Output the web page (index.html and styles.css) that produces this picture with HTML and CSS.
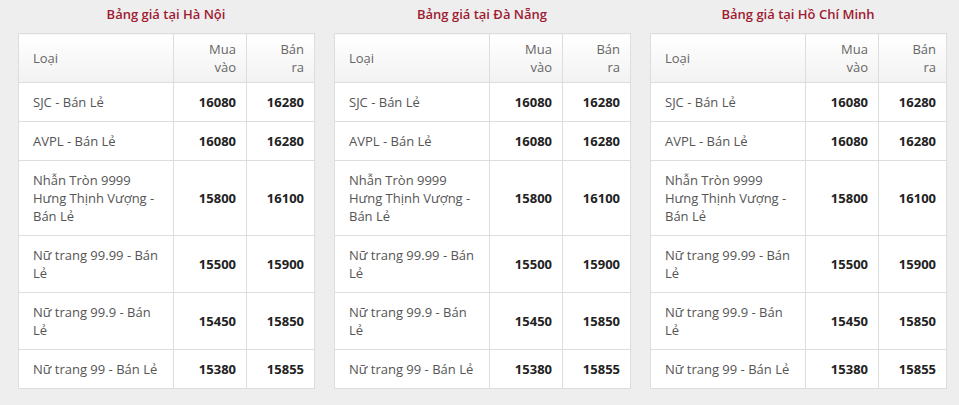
FILE: index.html
```html
<!DOCTYPE html>
<html lang="vi">
<head>
<meta charset="utf-8">
<title>Bảng giá vàng</title>
<link rel="stylesheet" href="styles.css">
</head>
<body>
<div class="wrap">
  <section class="col">
    <h3 class="title">Bảng giá tại Hà Nội</h3>
    <table class="price">
      <colgroup><col class="c1"><col class="c2"><col class="c3"></colgroup>
      <thead><tr><th class="name">Loại</th><th>Mua vào</th><th>Bán ra</th></tr></thead>
      <tbody>
        <tr><td class="name">SJC - Bán Lẻ</td><td>16080</td><td>16280</td></tr>
        <tr><td class="name">AVPL - Bán Lẻ</td><td>16080</td><td>16280</td></tr>
        <tr><td class="name">Nhẫn Tròn 9999 Hưng Thịnh Vượng - Bán Lẻ</td><td>15800</td><td>16100</td></tr>
        <tr><td class="name">Nữ trang 99.99 - Bán Lẻ</td><td>15500</td><td>15900</td></tr>
        <tr><td class="name">Nữ trang 99.9 - Bán Lẻ</td><td>15450</td><td>15850</td></tr>
        <tr><td class="name">Nữ trang 99 - Bán Lẻ</td><td>15380</td><td>15855</td></tr>
      </tbody>
    </table>
  </section>
  <section class="col">
    <h3 class="title">Bảng giá tại Đà Nẵng</h3>
    <table class="price">
      <colgroup><col class="c1"><col class="c2"><col class="c3"></colgroup>
      <thead><tr><th class="name">Loại</th><th>Mua vào</th><th>Bán ra</th></tr></thead>
      <tbody>
        <tr><td class="name">SJC - Bán Lẻ</td><td>16080</td><td>16280</td></tr>
        <tr><td class="name">AVPL - Bán Lẻ</td><td>16080</td><td>16280</td></tr>
        <tr><td class="name">Nhẫn Tròn 9999 Hưng Thịnh Vượng - Bán Lẻ</td><td>15800</td><td>16100</td></tr>
        <tr><td class="name">Nữ trang 99.99 - Bán Lẻ</td><td>15500</td><td>15900</td></tr>
        <tr><td class="name">Nữ trang 99.9 - Bán Lẻ</td><td>15450</td><td>15850</td></tr>
        <tr><td class="name">Nữ trang 99 - Bán Lẻ</td><td>15380</td><td>15855</td></tr>
      </tbody>
    </table>
  </section>
  <section class="col">
    <h3 class="title">Bảng giá tại Hồ Chí Minh</h3>
    <table class="price">
      <colgroup><col class="c1"><col class="c2"><col class="c3"></colgroup>
      <thead><tr><th class="name">Loại</th><th>Mua vào</th><th>Bán ra</th></tr></thead>
      <tbody>
        <tr><td class="name">SJC - Bán Lẻ</td><td>16080</td><td>16280</td></tr>
        <tr><td class="name">AVPL - Bán Lẻ</td><td>16080</td><td>16280</td></tr>
        <tr><td class="name">Nhẫn Tròn 9999 Hưng Thịnh Vượng - Bán Lẻ</td><td>15800</td><td>16100</td></tr>
        <tr><td class="name">Nữ trang 99.99 - Bán Lẻ</td><td>15500</td><td>15900</td></tr>
        <tr><td class="name">Nữ trang 99.9 - Bán Lẻ</td><td>15450</td><td>15850</td></tr>
        <tr><td class="name">Nữ trang 99 - Bán Lẻ</td><td>15380</td><td>15855</td></tr>
      </tbody>
    </table>
  </section>
</div>
</body>
</html>
```
FILE: styles.css
```css
html, body {
  margin: 0;
  padding: 0;
  background: #eeeeee;
}
body {
  font-family: "Open Sans", "Noto Sans", sans-serif;
  font-size: 13px;
  line-height: 18px;
  color: #555;
}
.wrap {
  display: flex;
  gap: 20px;
  padding: 5px 0 0 18px;
}
.col {
  width: 296px;
}
.title {
  margin: 0 0 10px;
  font-size: 13px;
  line-height: 18px;
  font-weight: 600;
  color: #9e1b32;
  text-align: center;
}
.price {
  width: 296px;
  table-layout: fixed;
  border-collapse: collapse;
  background: #fff;
  border: 1px solid #dddddd;
}
.c1 { width: 155px; }
.c2 { width: 73px; }
.c3 { width: 68px; }
.price th,
.price td {
  border: 1px solid #dddddd;
  text-align: right;
  vertical-align: middle;
  padding: 10px 10px 10px 15px;
}
.price th {
  font-weight: 400;
  color: #666;
  padding-top: 6px;
  padding-bottom: 6px;
  padding-left: 24px;
  background: linear-gradient(#ffffff, #f2f2f2);
}
.price td {
  font-weight: 700;
  color: #222;
}
.price .name {
  text-align: left;
  padding-left: 14px;
  padding-right: 14px;
  font-weight: 400;
  color: #555;
}
.price th.name {
  color: #666;
}
```
